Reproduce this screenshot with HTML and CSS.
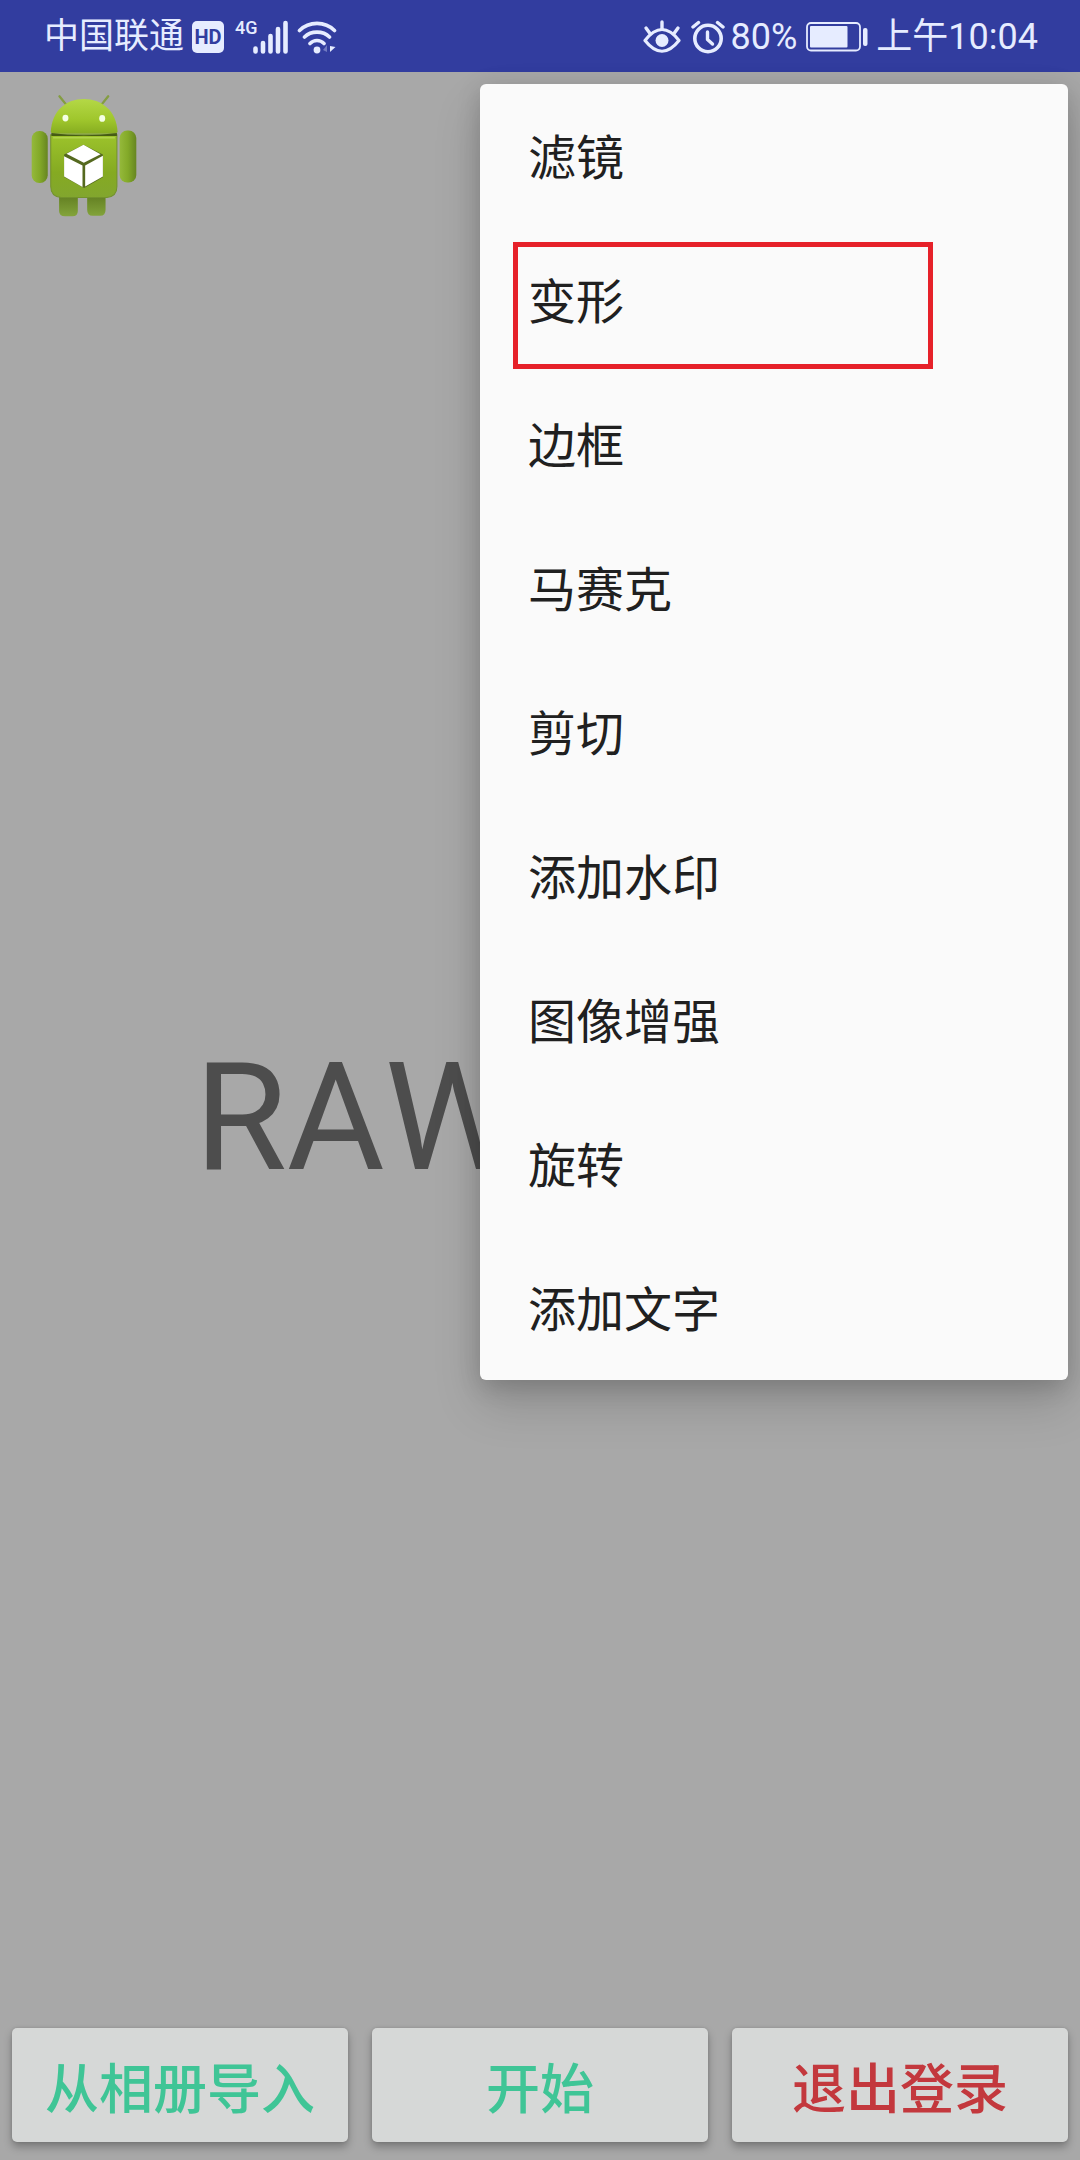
FILE: index.html
```html
<!DOCTYPE html>
<html lang="zh-CN">
<head>
<meta charset="utf-8">
<meta name="viewport" content="width=device-width, initial-scale=1">
<title>RAW</title>
<link rel="stylesheet" href="styles.css">
</head>
<body>
<div class="app">
  <header class="status">
    <div class="status-group">
      <span class="carrier">中国联通</span>
      <span class="hd">HD</span>
      <span class="network">
        <span class="network-type">4G</span>
        <svg class="signal" viewBox="0 0 36 34" width="36" height="34" aria-hidden="true">
          <path d="M2.5 28.500v3M10 23v8.500M17.500 16v15.500M25 9v22.500M32.500 3v28.500" fill="none" stroke="currentColor" stroke-width="4.600" stroke-linecap="round"/>
        </svg>
      </span>
      <svg class="wifi" viewBox="0 0 42 36" width="42" height="36" aria-hidden="true">
        <path d="M2.500 11.500C12 2 28 2 37.500 11.500M7.500 18C14 11.500 26 11.500 32.500 18M13 24.500C17 20.500 23 20.500 27 24.500" fill="none" stroke="currentColor" stroke-width="3.600" stroke-linecap="round"/>
        <circle cx="20" cy="31" r="3.400" fill="currentColor"/>
        <path d="M26 31l4-5v7z" fill="currentColor" opacity=".35"/>
        <path d="M33 27v6l5.500-5z" fill="currentColor"/>
      </svg>
    </div>
    <div class="status-group">
      <svg class="eye" viewBox="0 0 38 34" width="38" height="34" aria-hidden="true">
        <path d="M2 20.500Q19-1.500 36 20.500Q19 42 2 20.500Z" fill="none" stroke="currentColor" stroke-width="3.200" stroke-linejoin="round"/>
        <circle cx="19" cy="20.500" r="6.500" fill="currentColor"/>
        <path d="M19 2v7M3 8l4 5.500M35 8l-4 5.500" stroke="currentColor" stroke-width="3.400" stroke-linecap="round"/>
      </svg>
      <svg class="alarm" viewBox="0 0 34 34" width="34" height="34" aria-hidden="true">
        <circle cx="17" cy="18.500" r="13.200" fill="none" stroke="currentColor" stroke-width="3.600"/>
        <path d="M2 7l5.500-4.500M32 7l-5.500-4.500" stroke="currentColor" stroke-width="3.400" stroke-linecap="round"/>
        <path d="M16.500 12v7.500l5 4.500" fill="none" stroke="currentColor" stroke-width="3.400" stroke-linecap="round" stroke-linejoin="round"/>
      </svg>
      <span class="percent">80%</span>
      <svg class="battery" viewBox="0 0 62 30" width="62" height="30" aria-hidden="true">
        <rect x="1" y="1" width="53" height="27.500" rx="4" fill="none" stroke="currentColor" stroke-width="1.800"/>
        <rect x="4" y="4" width="37.500" height="21.500" rx="1" fill="currentColor"/>
        <rect x="57" y="6" width="4.500" height="18" rx="2" fill="currentColor"/>
      </svg>
      <time class="clock">上午10:04</time>
    </div>
  </header>

  <main class="stage">
    <div class="logo">
      <svg viewBox="94 70 320 374" width="107" height="125" role="img" aria-label="Android">
        <defs>
          <linearGradient id="head" x1="0" y1="0" x2="0" y2="1">
            <stop offset="0" stop-color="#b4d846"/><stop offset=".6" stop-color="#9fc62c"/><stop offset="1" stop-color="#86ac20"/>
          </linearGradient>
          <linearGradient id="torso" x1="0" y1="0" x2="0" y2="1">
            <stop offset="0" stop-color="#9cc32b"/><stop offset=".6" stop-color="#85aa22"/><stop offset="1" stop-color="#82a62e"/>
          </linearGradient>
          <linearGradient id="limb" x1="0" y1="0" x2="1" y2="0">
            <stop offset="0" stop-color="#95b93b"/><stop offset=".5" stop-color="#83a928"/><stop offset="1" stop-color="#668521"/>
          </linearGradient>
          <linearGradient id="leg" x1="0" y1="0" x2="0" y2="1">
            <stop offset="0" stop-color="#5c781d"/><stop offset="1" stop-color="#83a43b"/>
          </linearGradient>
        </defs>
        <path d="M179 80L201 107M325 80L303 107" stroke="#849d42" stroke-width="7" stroke-linecap="round"/>
        <path d="M178 365h56v58q0 16-16 16h-22q-18 0-18-16zM262 365h55v54q0 18-16 18h-23q-16 0-16-18z" fill="url(#leg)"/>
        <path d="M153 195h198v155q0 30-30 33H184q-31-3-31-33z" fill="url(#torso)" stroke="#72922b" stroke-width="3"/>
        <path d="M153 187C156 122 200 88 252 88S350 122 353 187Q350 192 343 192H163Q154 192 153 187Z" fill="url(#head)"/>
        <path d="M155 190Q252 203 351 190V199H155Z" fill="#465c13"/>
        <path d="M160 204H345" stroke="#b1d34b" stroke-width="4"/>
        <rect x="96" y="184" width="48" height="155" rx="23" fill="url(#limb)"/>
        <rect x="359" y="182" width="50" height="156" rx="23" fill="url(#limb)"/>
        <ellipse cx="197" cy="145" rx="9" ry="10" fill="#f4ffe5"/>
        <ellipse cx="307" cy="146" rx="9" ry="10" fill="#f4ffe5"/>
        <path d="M251 225l58 29v68l-56 32-60-33v-67z" fill="#55691f"/>
        <path d="M251 225l51 28-50 26-52-27zM193 259l55 28v64l-55-31zM309 258v62l-53 30v-63z" fill="#fff"/>
      </svg>
    </div>
    <div class="hero"><h1 class="title">RAW</h1></div>
    <footer class="actions">
      <button class="action" type="button">从相册导入</button>
      <button class="action" type="button">开始</button>
      <button class="action action-exit" type="button">退出登录</button>
    </footer>
  </main>

  <div class="menu" role="menu">
    <button class="item" type="button" role="menuitem">滤镜</button>
    <button class="item item-marked" type="button" role="menuitem">变形</button>
    <button class="item" type="button" role="menuitem">边框</button>
    <button class="item" type="button" role="menuitem">马赛克</button>
    <button class="item" type="button" role="menuitem">剪切</button>
    <button class="item" type="button" role="menuitem">添加水印</button>
    <button class="item" type="button" role="menuitem">图像增强</button>
    <button class="item" type="button" role="menuitem">旋转</button>
    <button class="item" type="button" role="menuitem">添加文字</button>
  </div>
</div>
</body>
</html>
```
FILE: styles.css
```css
* {
  box-sizing: border-box;
}

body {
  margin: 0;
  background: #a8a8a8;
  font-family: Roboto, "Noto Sans CJK SC", sans-serif;
}

button {
  border: 0;
  font-family: inherit;
  cursor: pointer;
}

.app {
  position: relative;
  display: flex;
  flex-direction: column;
  min-height: 100vh;
  overflow: hidden;
}

.status {
  display: flex;
  align-items: center;
  justify-content: space-between;
  height: 72px;
  padding: 2px 42px 0 44px;
  background: #323d9f;
  color: #e6ecff;
  font-size: 36px;
  line-height: 48px;
  white-space: nowrap;
}

.status-group {
  display: flex;
  align-items: center;
}

.carrier {
  font-size: 35px;
}

.hd {
  width: 32px;
  height: 32px;
  margin-left: 8px;
  border-radius: 5px;
  background: #e6ecff;
  color: #323d9f;
  font-size: 20px;
  font-weight: 700;
  line-height: 32px;
  text-align: center;
}

.network {
  display: flex;
  align-items: flex-start;
  margin-left: 11px;
}

.network-type {
  width: 18px;
  font-size: 18px;
  font-weight: 500;
  line-height: 16px;
}

.wifi {
  margin-left: 8px;
}

.eye {
  margin-right: 10px;
}

.alarm {
  margin-right: 6px;
}

.battery {
  margin: 0 8px 0 9px;
}

.stage {
  display: flex;
  flex: 1;
  flex-direction: column;
}

.logo {
  height: 154px;
  padding: 21px 31px;
}

.hero {
  display: flex;
  flex: 1;
  align-items: center;
  padding-left: 18%;
}

.title {
  margin: 0;
  color: #4d4d4d;
  font-size: 150px;
  font-weight: 400;
  font-kerning: none;
  line-height: 176px;
}

.actions {
  display: grid;
  grid-template-columns: repeat(3, 1fr);
  gap: 24px;
  padding: 18px 12px;
}

.action {
  height: 114px;
  padding: 0;
  border-radius: 5px;
  background: #d6d8d7;
  box-shadow: 0 5px 8px rgba(0, 0, 0, 0.28), 0 0 3px rgba(0, 0, 0, 0.14);
  color: #3fc596;
  font-size: 54px;
  font-weight: 500;
}

.action-exit {
  color: #c3383d;
}

.menu {
  position: absolute;
  top: 84px;
  right: 12px;
  display: flex;
  flex-direction: column;
  width: 588px;
  border-radius: 6px;
  background: #fafafa;
  box-shadow: 0 24px 48px rgba(0, 0, 0, 0.16), 0 6px 24px rgba(0, 0, 0, 0.16);
}

.item {
  position: relative;
  height: 144px;
  padding: 0 48px 4px;
  background: transparent;
  color: #202020;
  font-size: 48px;
  text-align: left;
}

.item-marked::after {
  content: "";
  position: absolute;
  inset: 14px 135px 3px 33px;
  border: 5px solid #e62129;
}
```
